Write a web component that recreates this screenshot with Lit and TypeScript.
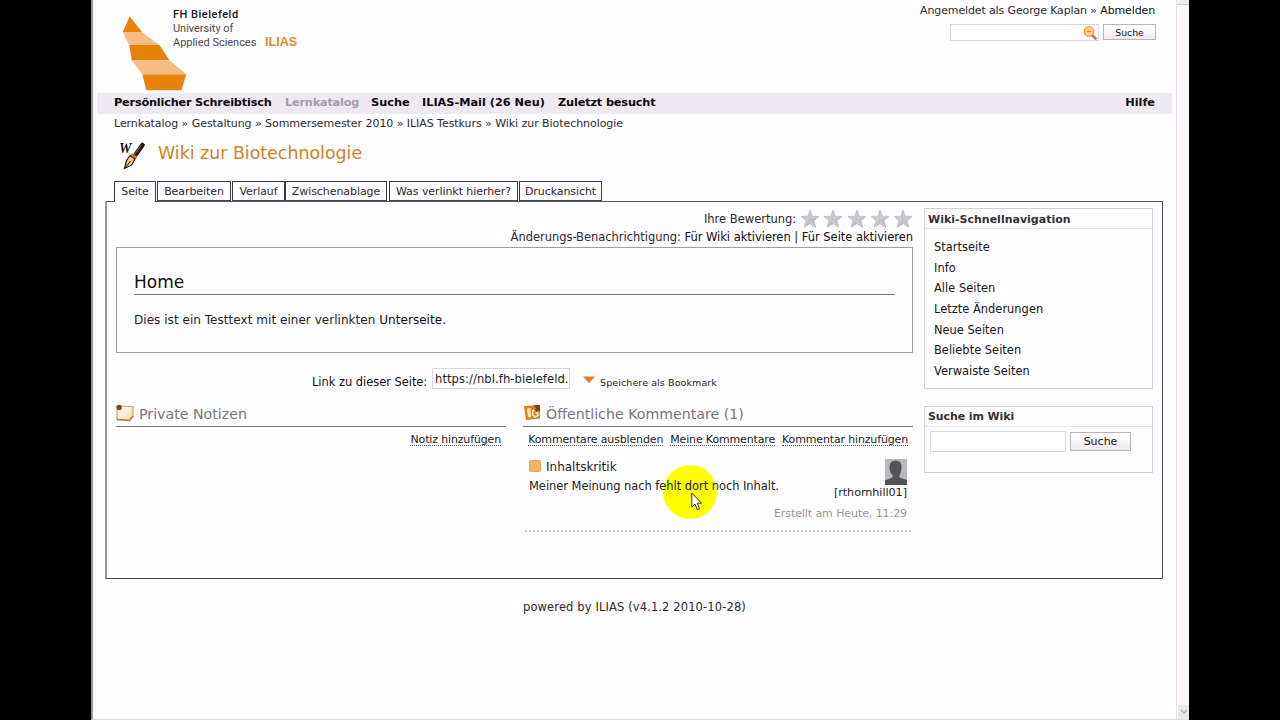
import { LitElement, html, css } from "lit";
import { customElement } from "lit/decorators.js";

const NAV = [
  ["Persönlicher Schreibtisch", "n1"],
  ["Lernkatalog", "n2"],
  ["Suche", "n3"],
  ["ILIAS-Mail (26 Neu)", "n4"],
  ["Zuletzt besucht", "n5"],
];
const TABS = [
  ["Seite", "t1"],
  ["Bearbeiten", "t2"],
  ["Verlauf", "t3"],
  ["Zwischenablage", "t4"],
  ["Was verlinkt hierher?", "t5"],
  ["Druckansicht", "t6"],
];
const QUICK = ["Startseite", "Info", "Alle Seiten", "Letzte Änderungen", "Neue Seiten", "Beliebte Seiten", "Verwaiste Seiten"];

const star = html`<svg width="20" height="20" viewBox="0 0 20 20">
  <path d="M10 1.2 L12.2 7.2 L19 7.5 L13.8 11.7 L15.8 18.3 L10 14.6 L4.2 18.3 L6.2 11.7 L1 7.5 L7.8 7.2 Z" fill="#cfcbd2" stroke="#c4bfc7" stroke-width="1"/>
  <path d="M10 1.5 L10 14.5 L4.5 18 L9 11 Z M18.5 7.7 L10 11 L15.5 18 L13.5 11.8 Z" fill="#b9b4bc" opacity=".6"/></svg>`;

@customElement("app-root")
export class AppRoot extends LitElement {
  static styles = css`
    :host { display: block; width: 1280px; height: 720px; overflow: hidden; background: #000; }
    * { box-sizing: border-box; }
    svg { display: block; flex: none; }
    .page { position: relative; width: 1098px; height: 720px; margin-left: 91px; display: flex; background: #fefdff;
      border-left: 2px solid #96928f; border-bottom: 1px solid #dedbdd;
      font: 11.5px/20px "DejaVu Sans", Verdana, sans-serif; color: #2d292e; white-space: nowrap; }
    .content { position: relative; width: 1083px; flex: none; display: flex; flex-direction: column; }
    .scroll { width: 13px; flex: none; border-left: 1px solid #e6e3e6; background: #fdf8fe; display: flex; flex-direction: column; justify-content: space-between; }
    .up { height: 5px; background: #f0edef; border-bottom: 1px solid #c9c5c8; }
    .down { height: 14px; background: #ebe8ea; margin-left: 1px; padding: 4px 2px; }
    .head { height: 93px; display: flex; padding-left: 29px; flex: none; }
    .logo { margin-top: 15px; }
    .brand { margin: 8px 0 0 -14px; font: 11px/14px "Roboto", sans-serif; color: #4c484c; width: 92px; letter-spacing: -.03px; }
    .brand b { display: block; font-weight: 500; color: #161316; letter-spacing: .5px; }
    .ilias { margin-top: 32px; font: bold 12.6px/20px "Liberation Sans", Arial, sans-serif; color: #e28a1c; }
    .user { margin-left: auto; margin-right: 21px; }
    .user .line { text-align: right; font-size: 11px; line-height: 22px; height: 20px; letter-spacing: -.13px; }
    .user .form { display: flex; justify-content: flex-end; gap: 4px; margin: 4px -1px 0 0; }
    .abm { color: #111; }
    .field { border: 1px solid #dad7da; background: #fff; }
    .f1 { width: 149px; height: 17px; display: flex; justify-content: flex-end; padding: 1px 1px 0 0; }
    .btn { border: 1px solid #b9b4ba; background: linear-gradient(#fff 20%, #efe8f0); text-align: center; color: #111; }
    .b1 { width: 53px; height: 16px; font-size: 9.3px; line-height: 15px; }
    .nav { height: 21px; margin: 0 4px; padding-left: 17px; display: flex; background: #efe9f2; font-weight: bold; color: #0c0a0c; font-size: 11.3px; flex: none; }
    .n1 { width: 171px; letter-spacing: -.2px; }
    .n2 { width: 86px; color: #a29ea4; letter-spacing: -.2px; }
    .n3 { width: 51px; }
    .n4 { width: 136px; }
    .n5 { letter-spacing: -.15px; }
    .help { margin-left: auto; margin-right: 17px; }
    .crumbs { height: 20px; margin: -1px 0 0 21px; flex: none; font-size: 11px; line-height: 21px; letter-spacing: -.055px; }
    .title { height: 47px; display: flex; padding: 8px 0 0 26px; color: #cf8422; font-size: 17.4px; line-height: 25px; flex: none; }
    .title svg { margin-right: 10px; }
    .tabs { height: 22px; margin: 0 0 -1px 21px; padding-top: 1px; display: flex; position: relative; flex: none; font-size: 11px; letter-spacing: -.07px; }
    .tab { height: 20px; border: 1px solid #3c393c; line-height: 19px; text-align: center; background: #fefdff; border-bottom-color: #4a474a; }
    .t1 { width: 42px; height: 21px; border-bottom: 0; margin-right: 1px; }
    .t2 { width: 74px; margin-right: 1px; }
    .t3 { width: 53px; }
    .t4 { width: 102px; margin: 0 2px 0 0; }
    .t5 { width: 129px; margin-right: 1px; }
    .t6 { width: 83px; }
    .panel { width: 1058px; height: 378px; margin-left: 12px; border: 1px solid #4d4a4d; border-left: 2px solid #9a979a; border-top-color: #555; display: flex; padding-left: 9px; flex: none; }
    .left { width: 797px; flex: none; }
    .rate { display: flex; justify-content: flex-end; padding-top: 7px; height: 24px; }
    .rate span { margin-right: 4px; }
    .stars { display: flex; gap: 3.2px; }
    .notify { text-align: right; height: 21px; margin-top: 1px; letter-spacing: -.03px; }
    .notify b, .dark { font-weight: normal; color: #0e0c0e; }
    .box { height: 106px; border: 1px solid #a09da0; margin-top: -1px; padding: 23px 17px 0 17px; color: #222; }
    .box h1 { margin: 0; font-weight: normal; font-size: 17px; height: 24px; line-height: 22px; color: #111; border-bottom: 1px solid #777; }
    .box p { margin: 15px 0 0; font-size: 12px; letter-spacing: .04px; }
    .link { display: flex; height: 51px; padding: 15px 0 0 196px; }
    .link .lbl { width: 120px; margin-top: 4px; letter-spacing: -.05px; color: #111; }
    .url { width: 138px; height: 21px; overflow: hidden; padding-left: 2px; line-height: 20px; color: #222; font-size: 11.6px; letter-spacing: .05px; }
    .tri { margin: 8px 4px 0 12px; }
    .bm { font-size: 9.5px; margin-top: 5px; color: #222; letter-spacing: .1px; }
    .cols { display: flex; justify-content: space-between; }
    .col { width: 390px; }
    .ch { display: flex; height: 23px; border-bottom: 1px solid #7e7779; color: #79757a; font-size: 14.2px; gap: 5px; }
    .acts { display: flex; justify-content: flex-end; gap: 7px; height: 27px; padding: 6px 5px 0 0; font-size: 11px; letter-spacing: -.15px; }
    .acts a { border-bottom: 1px dotted #555; line-height: 14px; height: 13px; color: #222; }
    .comment { display: flex; margin: 0 2px 0 2px; padding: 5px 4px 0; height: 78px; border-bottom: 2px dotted #cfccd0; }
    .cl { flex: 1; min-width: 0; }
    .ct { display: flex; gap: 5px; font-size: 12px; color: #222; line-height: 16px; }
    .cm { line-height: 20px; margin-top: 1px; color: #222; letter-spacing: -.06px; }
    .cr { display: flex; flex-direction: column; align-items: flex-end; }
    .cr .who { line-height: 15px; color: #222; font-size: 11.2px; letter-spacing: -.05px; }
    .cr .when { color: #999599; line-height: 20px; margin-top: 4px; font-size: 11px; letter-spacing: -.08px; }
    .right { width: 229px; margin-left: 11px; padding-top: 6px; }
    .card { border: 1px solid #d3d0d3; height: 181px; }
    .card h2 { margin: 0; font-size: 11px; line-height: 21px; height: 20px; padding-left: 3px; border-bottom: 1px solid #e6e3e6; color: #343034; }
    .card ul { list-style: none; margin: 8px 0 0; padding: 0 0 0 9px; font-size: 11.4px; line-height: 20.67px; color: #171417; letter-spacing: .04px; }
    .c2 { margin-top: 17px; height: 67px; }
    .c2 h2 { line-height: 19px; letter-spacing: -.1px; }
    .c2 .form { display: flex; gap: 4px; padding: 4px 0 0 5px; }
    .f2 { width: 136px; height: 21px; }
    .b2 { width: 61px; height: 19px; margin-top: 1px; line-height: 18px; font-size: 11px; }
    .foot { margin: 18px 0 0 430px; letter-spacing: .12px; }
    .spot, .cursor { position: absolute; }
    .spot { left: 570px; top: 465px; width: 54px; height: 54px; border-radius: 50%; background: #ffff00; }
    .cursor { left: 598px; top: 492px; }
  `;

  render() {
    return html`<div class="page">
      <div class="spot"></div>
      <div class="content">
        <div class="head">
          <svg class="logo" width="65" height="76" viewBox="0 0 65 76">
            <path d="M7.700 1.300 L20 17 H.7 Z M7.300 30 H37.500 L47.500 45.300 H9.700 Z M20.300 59.300 H64.300 L59.500 75.200 H24.300 Z" fill="#e78209"/>
            <path d="M.7 17 H20 L37.500 30 H7.300 Z M9.700 45.300 H47.500 L64.300 59.300 H20.300 Z" fill="#f6bd85"/>
          </svg>
          <div class="brand"><b>FH Bielefeld</b>University of<br>Applied Sciences</div>
          <div class="ilias">ILIAS</div>
          <div class="user">
            <div class="line">Angemeldet als George Kaplan » <span class="abm">Abmelden</span></div>
            <div class="form">
              <div class="field f1"><svg width="14" height="14" viewBox="0 0 14 14"><path d="M9 9 L12.500 12.500" stroke="#bb7b45" stroke-width="2.600" stroke-linecap="round"/><circle cx="6" cy="5.500" r="4.800" fill="#fbd58a" stroke="#e1a044" stroke-width="1.300"/><path d="M3.500 5.500 H8.500" stroke="#d18b35" stroke-width="1.200"/></svg></div>
              <div class="btn b1">Suche</div>
            </div>
          </div>
        </div>
        <div class="nav">${NAV.map(([t, c]) => html`<span class=${c}>${t}</span>`)}<span class="help">Hilfe</span></div>
        <div class="crumbs">Lernkatalog » Gestaltung » Sommersemester 2010 » ILIAS Testkurs » Wiki zur Biotechnologie</div>
        <div class="title">
          <svg width="29" height="29" viewBox="0 0 29 29">
            <text x="0" y="12" font-family="Liberation Serif, serif" font-style="italic" font-weight="bold" font-size="14" fill="#15110d">W</text>
            <path d="M23.500 4 L16 14.500" stroke="#21150e" stroke-width="4.500" stroke-linecap="round"/>
            <path d="M22.500 4 L15.500 13.500" stroke="#9d6b45" stroke-width="1"/>
            <path d="M12 13 L17.500 17" stroke="#d88726" stroke-width="2.500"/>
            <path d="M11 14.500 L16 18 L12.500 24 L5.500 27.500 L7.500 19.500 Z" fill="#f3c98e" stroke="#2b1a0d" stroke-width="1.200"/>
            <path d="M6 27 L11.500 20" stroke="#2b1a0d"/>
          </svg><span>Wiki zur Biotechnologie</span>
        </div>
        <div class="tabs">${TABS.map(([t, c]) => html`<div class="tab ${c}">${t}</div>`)}</div>
        <div class="panel">
          <div class="left">
            <div class="rate"><span>Ihre Bewertung:</span><div class="stars">${[1, 2, 3, 4, 5].map(() => star)}</div></div>
            <div class="notify">Änderungs-Benachrichtigung: <b>Für Wiki aktivieren</b> | <b>Für Seite aktivieren</b></div>
            <div class="box"><h1>Home</h1><p>Dies ist ein Testtext mit einer verlinkten <span class="dark">Unterseite.</span></p></div>
            <div class="link">
              <span class="lbl">Link zu dieser Seite:</span><div class="field url">https://nbl.fh-bielefeld.</div>
              <svg class="tri" width="14" height="8"><path d="M1 .5 H13 L7 7 Z" fill="#e0801c"/></svg><span class="bm">Speichere als Bookmark</span>
            </div>
            <div class="cols">
              <div class="col">
                <div class="ch"><svg width="18" height="19" viewBox="0 0 18 19">
                  <defs><linearGradient id="g" x1="0" y1="0" x2="1" y2="1"><stop offset=".3" stop-color="#fff8f2"/><stop offset="1" stop-color="#f5cf9d"/></linearGradient></defs>
                  <path d="M1 2 L17 2.500 V13 L13 16.500 L1 15.500 Z" fill="url(#g)" stroke="#d8a04c" stroke-width="1.200"/>
                  <path d="M17 12 L13.500 16.500 L1 15.500" fill="none" stroke="#b57c24" stroke-width="1.500"/><circle cx="3.200" cy="3.500" r="2.700" fill="#85481a"/></svg>
                  <span>Private Notizen</span></div>
                <div class="acts"><a>Notiz hinzufügen</a></div>
              </div>
              <div class="col">
                <div class="ch"><svg width="18" height="19" viewBox="0 0 18 19">
                  <path d="M1 2 L16.500 1 L17 14.500 L3 16 Z" fill="#d58321"/><path d="M10 1.500 L17 1 V8 Z" fill="#7d430f"/>
                  <path d="M4 4.500 L7.500 4 L8 13 L5 13.500 Z" fill="#ffe3a6"/><path d="M13.500 5 L10 6.500 L9.500 10.500 L12 13 L15 11.500 L14.500 9 L12.500 9" fill="none" stroke="#fff0cf" stroke-width="1.600"/><path d="M11 5 L16 4 L13.500 8 Z" fill="#6d3a10"/></svg>
                  <span>Öffentliche Kommentare (1)</span></div>
                <div class="acts"><a>Kommentare ausblenden</a><a>Meine Kommentare</a><a>Kommentar hinzufügen</a></div>
                <div class="comment">
                  <div class="cl"><div class="ct"><svg width="12" height="16"><rect x=".5" y="1.500" width="11" height="11" rx="1" fill="#f8b366" stroke="#eda452"/></svg><span>Inhaltskritik</span></div>
                    <div class="cm">Meiner Meinung nach fehlt dort noch Inhalt.</div></div>
                  <div class="cr"><svg width="22" height="26" viewBox="0 0 22 26"><rect width="22" height="26" fill="#bab8ba"/><path d="M4.500 7.500 Q5 1.500 10.500 1.500 Q16.500 1.500 16.500 7.500 V10 Q16 14 14.500 16 V18.500 L22 21 V26 H0 V21.500 L7.500 18.500 V16 Q5 14 4.500 10 Z" fill="#555355"/></svg>
                    <span class="who">[rthornhill01]</span><span class="when">Erstellt am Heute, 11:29</span></div>
                </div>
              </div>
            </div>
          </div>
          <div class="right">
            <div class="card"><h2>Wiki-Schnellnavigation</h2><ul>${QUICK.map((q) => html`<li>${q}</li>`)}</ul></div>
            <div class="card c2"><h2>Suche im Wiki</h2><div class="form"><div class="field f2"></div><div class="btn b2">Suche</div></div></div>
          </div>
        </div>
        <div class="foot">powered by ILIAS (v4.1.2 2010-10-28)</div>
      </div>
      <div class="scroll"><div class="up"></div><div class="down"><svg width="8" height="6"><path d="M1 1 L4 4 L7 1" fill="none" stroke="#b5b2b5" stroke-width="1.500"/></svg></div></div>
      <svg class="cursor" width="12" height="20" viewBox="0 0 12 20"><path d="M.8 1 V15 L4 12 L6.300 17.800 L8.600 16.800 L6.300 11.200 H10.500 Z" fill="#fff" stroke="#333" stroke-width="1"/></svg>
    </div>`;
  }
}
